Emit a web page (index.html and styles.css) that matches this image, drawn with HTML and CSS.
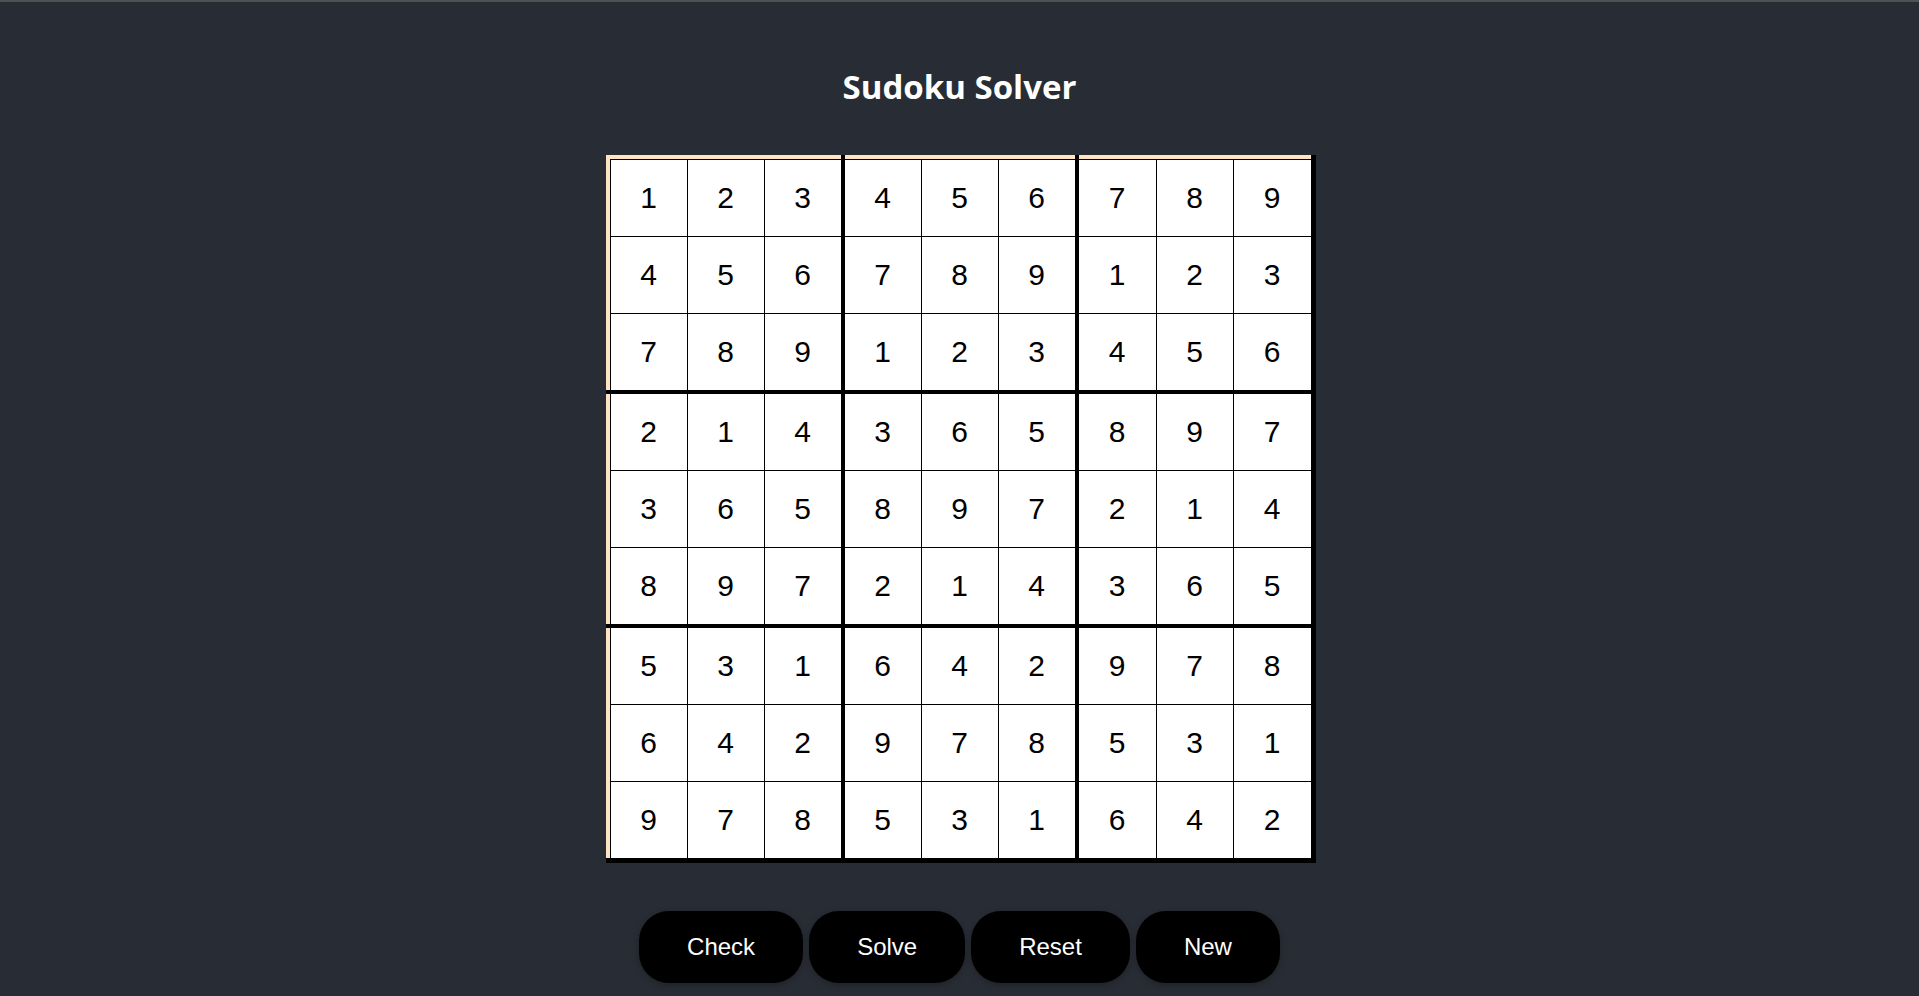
FILE: index.html
```html
<!DOCTYPE html>
<html lang="en">
<head>
<meta charset="utf-8">
<title>Sudoku Solver</title>
<link rel="stylesheet" href="styles.css">
</head>
<body>
<div class="app">
  <h1 class="title">Sudoku Solver</h1>
  <div class="frame">
    <div class="board">
      <div class="box">
        <div class="cell">1</div><div class="cell">2</div><div class="cell">3</div>
        <div class="cell">4</div><div class="cell">5</div><div class="cell">6</div>
        <div class="cell">7</div><div class="cell">8</div><div class="cell">9</div>
      </div>
      <div class="box">
        <div class="cell">4</div><div class="cell">5</div><div class="cell">6</div>
        <div class="cell">7</div><div class="cell">8</div><div class="cell">9</div>
        <div class="cell">1</div><div class="cell">2</div><div class="cell">3</div>
      </div>
      <div class="box box-wide">
        <div class="cell">7</div><div class="cell">8</div><div class="cell">9</div>
        <div class="cell">1</div><div class="cell">2</div><div class="cell">3</div>
        <div class="cell">4</div><div class="cell">5</div><div class="cell">6</div>
      </div>
      <div class="box">
        <div class="cell">2</div><div class="cell">1</div><div class="cell">4</div>
        <div class="cell">3</div><div class="cell">6</div><div class="cell">5</div>
        <div class="cell">8</div><div class="cell">9</div><div class="cell">7</div>
      </div>
      <div class="box">
        <div class="cell">3</div><div class="cell">6</div><div class="cell">5</div>
        <div class="cell">8</div><div class="cell">9</div><div class="cell">7</div>
        <div class="cell">2</div><div class="cell">1</div><div class="cell">4</div>
      </div>
      <div class="box box-wide">
        <div class="cell">8</div><div class="cell">9</div><div class="cell">7</div>
        <div class="cell">2</div><div class="cell">1</div><div class="cell">4</div>
        <div class="cell">3</div><div class="cell">6</div><div class="cell">5</div>
      </div>
      <div class="box">
        <div class="cell">5</div><div class="cell">3</div><div class="cell">1</div>
        <div class="cell">6</div><div class="cell">4</div><div class="cell">2</div>
        <div class="cell">9</div><div class="cell">7</div><div class="cell">8</div>
      </div>
      <div class="box">
        <div class="cell">6</div><div class="cell">4</div><div class="cell">2</div>
        <div class="cell">9</div><div class="cell">7</div><div class="cell">8</div>
        <div class="cell">5</div><div class="cell">3</div><div class="cell">1</div>
      </div>
      <div class="box box-wide">
        <div class="cell">9</div><div class="cell">7</div><div class="cell">8</div>
        <div class="cell">5</div><div class="cell">3</div><div class="cell">1</div>
        <div class="cell">6</div><div class="cell">4</div><div class="cell">2</div>
      </div>
    </div>
  </div>
  <div class="controls">
    <button class="btn">Check</button>
    <button class="btn">Solve</button>
    <button class="btn">Reset</button>
    <button class="btn">New</button>
  </div>
</div>
</body>
</html>
```
FILE: styles.css
```css
html, body {
  margin: 0;
  padding: 0;
  background: #282c34;
}

.app {
  box-sizing: border-box;
  min-height: 100vh;
  border-top: 2px solid #4f5154;
  padding-top: 63px;
  display: flex;
  flex-direction: column;
  align-items: center;
}

.title {
  margin: 0 0 46px;
  font: 700 33px/44px "Open Sans", "Noto Sans", sans-serif;
  color: #ffffff;
}

.frame {
  margin-left: 2px;
  padding: 4px 0 0 4px;
  background-color: #000;
  background-image:
    linear-gradient(to right, #ffe4c4 0 235px, #000 235px 239px, #ffe4c4 239px 469px, #000 469px 473px, #ffe4c4 473px 705px, #000 705px),
    linear-gradient(to bottom, #ffe4c4 0 235px, #000 235px 239px, #ffe4c4 239px 469px, #000 469px 473px, #ffe4c4 473px 703px, #000 703px);
  background-size: 100% 4px, 4px 100%;
  background-position: left top, left top;
  background-repeat: no-repeat;
}

.board {
  display: grid;
  grid-template-columns: 230px 230px 232px;
  gap: 4px;
  padding: 1px 5px 5px 1px;
  background: #000;
}

.box {
  display: grid;
  grid-template-columns: repeat(3, 76px);
  grid-auto-rows: 76px;
  gap: 1px;
}

.box-wide {
  grid-template-columns: 77px 76px 77px;
}

.cell {
  background: #ffffff;
  display: flex;
  align-items: center;
  justify-content: center;
  font: 30px "Liberation Sans", Arial, sans-serif;
  color: #000;
}

.controls {
  display: flex;
  gap: 6px;
  margin-top: 48px;
}

.btn {
  font: 24px/28px "Liberation Sans", Arial, sans-serif;
  color: #ffffff;
  background: #000;
  border: 0;
  border-radius: 30px;
  padding: 22px 48px;
  box-shadow: 0 2px 6px rgba(0, 0, 0, 0.25);
  cursor: pointer;
}
```
